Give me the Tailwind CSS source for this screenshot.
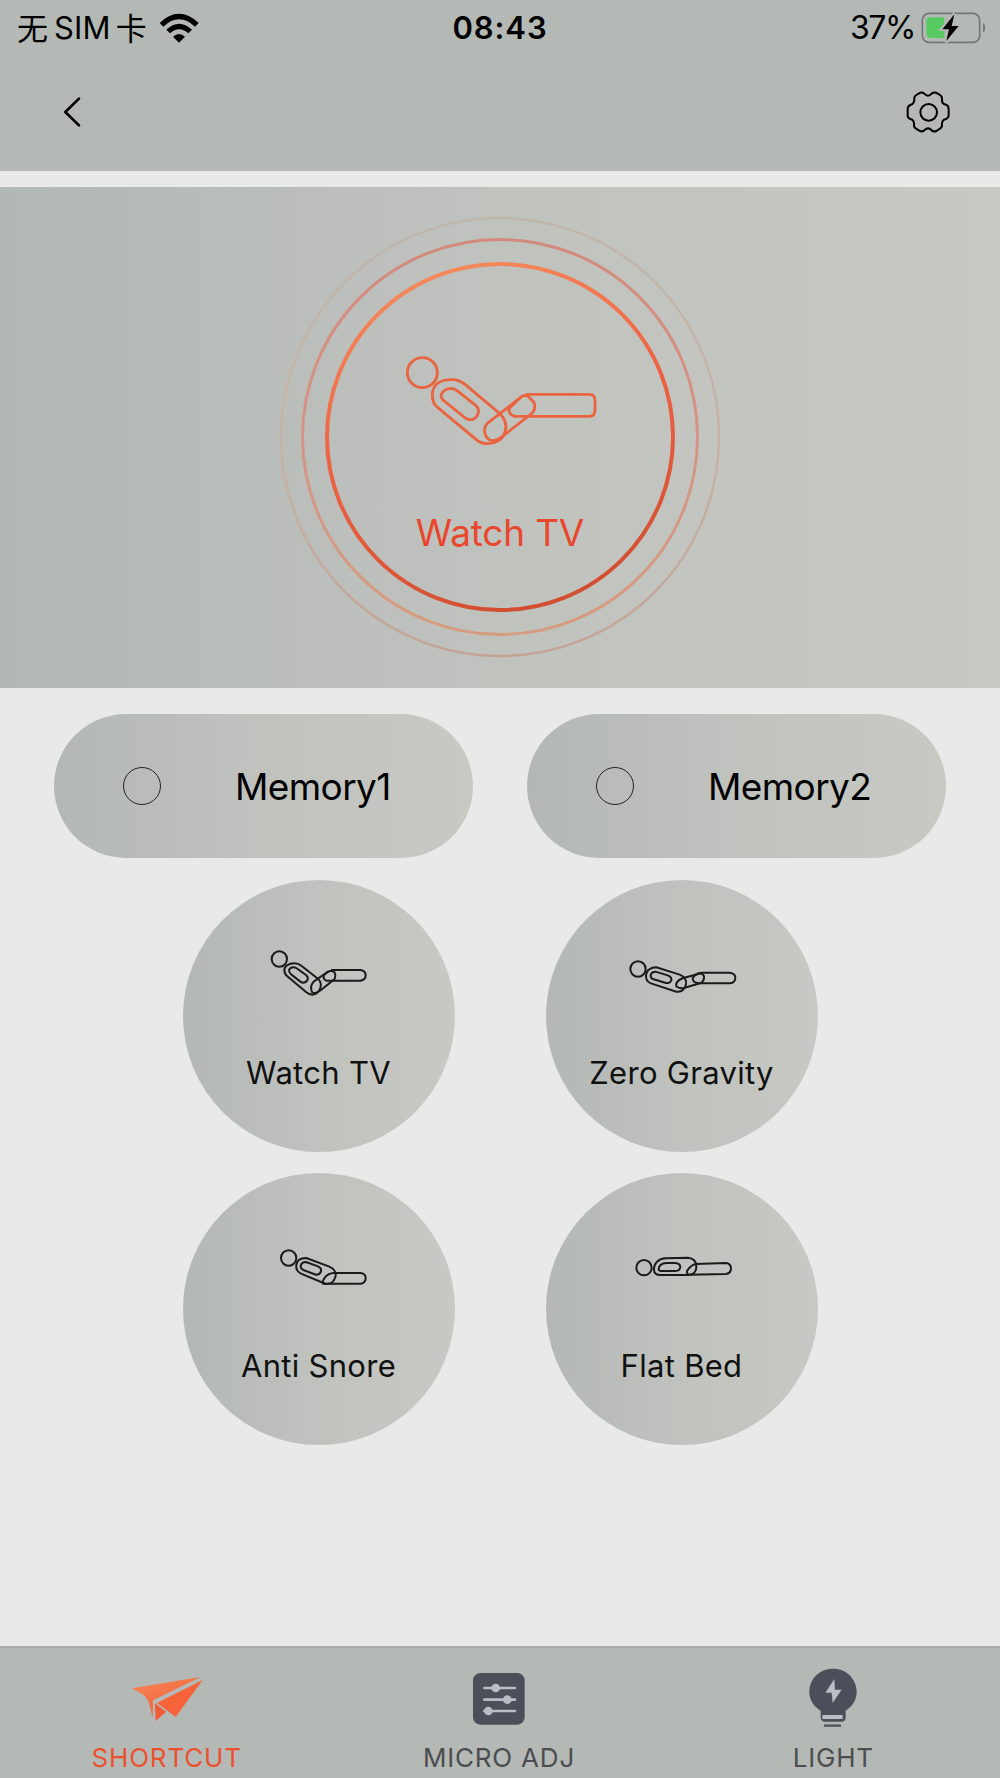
<!DOCTYPE html>
<html lang="en">

<head>
    <meta charset="UTF-8">
    <meta name="viewport" content="width=device-width, initial-scale=1.0">
    <title>Bed Remote</title>
    <script src="https://cdn.jsdelivr.net/npm/@tailwindcss/browser@4"></script>
</head>

<body class="bg-[#e9e9e9] h-[1778px] w-[1000px] flex flex-col overflow-hidden text-black font-['Inter','Noto_Sans_CJK_SC',sans-serif]">
    <header class="h-[171px] bg-[#b4b9b5] shrink-0">
        <!-- status bar -->
        <div class="h-[54px] grid grid-cols-3 items-center text-[31px] leading-[54px]">
            <div class="flex items-center pl-[17px] pt-px">
                <span class="text-[31px] leading-[50px] -mt-[3px] font-['Noto_Sans_CJK_SC',sans-serif] font-normal">无</span>
                <span class="ml-[6px] tracking-[0.2px]">SIM</span>
                <span class="ml-[5px] text-[31px] leading-[50px] -mt-[3px] font-['Noto_Sans_CJK_SC',sans-serif] font-normal">卡</span>
                <svg class="ml-[12px] w-[40px] h-[30px]" viewBox="478 36 120 90">
                    <path d="M480 66Q538 11 597 66L586 77Q538 33 491 77Z" />
                    <path d="M500 86Q538 50 577 86L566 97Q538 72 511 97Z" />
                    <path d="M520 107Q538 91 556 107L538 125Z" />
                </svg>
            </div>
            <div class="pt-px text-center font-semibold tracking-[0.9px]">08:43</div>
            <div class="flex items-center justify-end pr-[14px]">
                <span class="pt-px text-[32px] tracking-[-1.4px]">37%</span>
                <svg class="ml-[6px] w-[65px] h-[34px]" viewBox="1262 28 195 102">
                    <rect x="1266" y="35" width="172" height="87" rx="20" fill="none" stroke="#747875" stroke-width="5" />
                    <path d="M1448 64Q1455 68 1455 78Q1455 88 1448 92Z" fill="#747875" />
                    <path d="M1290 47H1332V109H1290Q1278 109 1278 97V59Q1278 47 1290 47Z" fill="#57cb62" />
                    <path d="M1362 36L1324 83H1345L1337 122L1376 73H1354Z" stroke="#b4b9b5" stroke-width="10" />
                    <path d="M1362 38L1326 83H1346L1338 118L1375 73H1354Z" />
                </svg>
            </div>
        </div>
        <div class="flex items-center justify-between pl-[63px] pr-[48px] h-[116px]">
            <svg class="w-[20px] h-[32px]" viewBox="188 288 60 96" fill="none" stroke="currentColor" stroke-width="8" stroke-linecap="round" stroke-linejoin="round">
                <path d="M236 296L195 336L236 376" />
            </svg>
            <svg class="w-[48px] h-[48px]" viewBox="1212 264 144 144" fill="none" stroke="currentColor" stroke-width="6" stroke-linejoin="round">
                <path d="M1257 280Q1266 275 1273 281Q1284 293 1295 281Q1303 275 1312 280L1320 285Q1327 289 1326 298Q1325 312 1338 314Q1346 317 1346 328V346Q1346 354 1338 357Q1325 360 1326 374Q1327 382 1320 386L1309 393Q1300 397 1294 390Q1284 380 1274 390Q1267 397 1258 392L1248 386Q1241 382 1242 374Q1243 360 1231 357Q1223 355 1223 346V327Q1223 318 1231 315Q1244 311 1243 297Q1242 289 1249 285Z" />
                <circle cx="1286" cy="337" r="25" />
            </svg>
        </div>
    </header>

    <!-- current position -->
    <section class="relative mt-[16px] h-[501px] shrink-0 bg-linear-to-r from-[#b2b8b5] via-[#c0c2be] to-[#c8c9c4] flex flex-col items-center text-[#e8472c]">
        <svg class="absolute left-[270px] top-[20px] w-[460px] h-[460px]" viewBox="0 0 460 460" fill="none">
            <defs>
                <linearGradient id="ringInner" x1="0.3" y1="0" x2="0.6" y2="1">
                    <stop offset="0" stop-color="#f58a5c" />
                    <stop offset="0.45" stop-color="#ee6243" />
                    <stop offset="1" stop-color="#d24e30" />
                </linearGradient>
                <linearGradient id="ringMiddle" x1="0" y1="0" x2="0" y2="1">
                    <stop offset="0" stop-color="#d3897d" />
                    <stop offset="0.5" stop-color="#d59484" />
                    <stop offset="1" stop-color="#d69c7f" />
                </linearGradient>
                <linearGradient id="ringOuter" x1="0" y1="0" x2="0" y2="1">
                    <stop offset="0" stop-color="#bfb6ac" />
                    <stop offset="0.5" stop-color="#c6b3a5" />
                    <stop offset="1" stop-color="#c3a396" />
                </linearGradient>
            </defs>
            <circle cx="230" cy="230" r="219" stroke="url(#ringOuter)" stroke-width="2.500" />
            <circle cx="230" cy="230" r="197.500" stroke="url(#ringMiddle)" stroke-width="3" />
            <circle cx="230" cy="230" r="173" stroke="url(#ringInner)" stroke-width="4" />
        </svg>
        <svg class="mt-[163px] w-[200px] h-[100px]" viewBox="30 30 600 300" fill="none" stroke="#ea6440" stroke-width="8.500">
            <circle cx="97" cy="98" r="45" />
            <path d="M127 165C127 132 152 119 185 119C204 119 215 125 226 134L325 217C345 234 351 256 345 276C338 300 315 311 293 311C280 311 268 307 258 298L140 200C129 190 127 178 127 165Z" />
            <path d="M154 163Q162 146 183 145C192 145 198 149 204 154L257 196C265 204 268 212 264 221C260 232 252 240 240 239C232 238 226 235 222 231L165 185C156 178 151 172 154 163Z" />
            <path d="M291 251L392 172Q404 162 416 170L431 186Q440 204 426 220L335 291Q316 306 300 300C283 292 278 264 291 251Z" />
            <path d="M408 163H598Q615 164 615 181V211Q615 229 598 229H374C358 224 351 211 363 200L390 174" />
        </svg>
        <div class="mt-[59px] text-[37px] leading-[48px] tracking-[-0.2px]">Watch TV</div>
    </section>

    <main class="flex-1 flex flex-col items-center">
        <div class="mt-[26px] flex gap-[54px]">
            <div class="w-[419px] h-[144px] rounded-full bg-linear-to-r from-[#b3b8b6] via-[#c0c2be] to-[#c9c9c4] flex items-center pl-[69px]">
                <span class="w-[38px] h-[38px] rounded-full border border-[#222]"></span>
                <span class="ml-[74px] pt-px text-[37px] leading-[48px] tracking-[-0.6px]">Memory1</span>
            </div>
            <div class="w-[419px] h-[144px] rounded-full bg-linear-to-r from-[#b3b8b6] via-[#c0c2be] to-[#c9c9c4] flex items-center pl-[69px]">
                <span class="w-[38px] h-[38px] rounded-full border border-[#222]"></span>
                <span class="ml-[74px] pt-px text-[37px] leading-[48px] tracking-[-0.6px]">Memory2</span>
            </div>
        </div>

        <div class="mt-[22px] grid grid-cols-2 gap-x-[91px] gap-y-[21px] text-[31px] leading-[40px] tracking-[0.3px] text-[#111]">
            <div class="w-[272px] h-[272px] rounded-full bg-linear-to-r from-[#b3b8b6] via-[#c0c2be] to-[#c8c9c4] flex flex-col items-center">
                <svg class="mt-[60px] w-[140px] h-[60px]" viewBox="236 210 420 180" fill="none" stroke="#1a1a1a" stroke-width="6">
                    <circle cx="327" cy="267" r="23" />
                    <path d="M342 300C342 287 356 280 372 280C381 280 387 282 393 287L440 324C450 332 454 343 450 354C445 367 437 374 426 374C419 374 413 371 408 367L350 318C344 313 342 307 342 300Z" />
                    <path d="M356 300Q361 291 371 292Q377 293 382 297L407 315Q414 321 412 328Q408 338 398 338Q393 337 389 334L362 313Q355 307 356 300Z" />
                    <path d="M430 335L471 306Q482 300 492 306Q498 316 492 328L449 362Q436 372 426 368Q417 350 430 335Z" />
                    <path d="M482 300H570Q586 302 586 316Q586 330 570 332H468Q456 326 461 315L474 305" />
                </svg>
                <div class="mt-[53px]">Watch TV</div>
            </div>
            <div class="w-[272px] h-[272px] rounded-full bg-linear-to-r from-[#b3b8b6] via-[#c0c2be] to-[#c8c9c4] flex flex-col items-center">
                <svg class="mt-[60px] w-[140px] h-[60px]" viewBox="245 210 420 180" fill="none" stroke="#1a1a1a" stroke-width="6">
                    <circle cx="323" cy="297" r="23" />
                    <path d="M347 316C347 301 361 292 378 292L448 314C462 319 470 332 467 343C463 358 453 367 438 365L362 340C351 336 346 328 347 316Z" />
                    <path d="M361 316Q363 305 376 305L412 316Q425 321 423 331Q418 341 407 339L370 328Q360 324 361 316Z" />
                    <path d="M459 324L501 313Q514 306 521 318Q522 334 511 339L461 354Q444 356 438 349Q434 333 459 324Z" />
                    <path d="M514 308H598Q615 310 615 323Q615 338 598 340H505Q486 337 487 325Q494 309 514 308Z" />
                </svg>
                <div class="mt-[53px]">Zero Gravity</div>
            </div>
            <div class="w-[272px] h-[272px] rounded-full bg-linear-to-r from-[#b3b8b6] via-[#c0c2be] to-[#c8c9c4] flex flex-col items-center">
                <svg class="mt-[61px] w-[140px] h-[60px]" viewBox="236 220 420 180" fill="none" stroke="#1a1a1a" stroke-width="6">
                    <circle cx="355" cy="292" r="23" />
                    <path d="M378 314C379 299 391 292 408 292L477 318C491 324 499 336 495 349C491 363 480 372 465 369L392 339C381 333 376 326 378 314Z" />
                    <path d="M391 315Q394 304 407 304L443 317Q454 322 452 332Q448 343 437 342L399 328Q390 323 391 315Z" />
                    <path d="M490 337H571Q586 339 586 352Q586 367 571 369H458Q454 364 464 350Q474 338 490 337Z" />
                </svg>
                <div class="mt-[52px]">Anti Snore</div>
            </div>
            <div class="w-[272px] h-[272px] rounded-full bg-linear-to-r from-[#b3b8b6] via-[#c0c2be] to-[#c8c9c4] flex flex-col items-center">
                <svg class="mt-[61px] w-[140px] h-[60px]" viewBox="245 220 420 180" fill="none" stroke="#1a1a1a" stroke-width="6">
                    <circle cx="341" cy="321" r="23" />
                    <path d="M371 326C371 306 386 294 406 293L473 291C489 292 499 304 498 318C498 333 488 343 472 343H390C379 343 371 337 371 326Z" />
                    <path d="M385 325Q387 308 408 307H434Q450 308 450 319Q449 331 434 331H391Q385 330 385 325Z" />
                    <path d="M497 310L588 307Q602 310 602 323Q602 338 587 340L476 342Q466 337 472 328Q482 313 497 310Z" />
                </svg>
                <div class="mt-[52px]">Flat Bed</div>
            </div>
        </div>
    </main>

    <nav class="h-[132px] shrink-0 border-t-2 border-[#a9adaa] bg-[#b4b9b5] grid grid-cols-3 text-[26px] leading-[34px] tracking-[0.8px] text-[#4b4d50]">
        <div class="flex flex-col items-center text-[#ea512f]">
            <svg class="mt-[20px] w-[76px] h-[64px]" viewBox="385 114 228 192">
                <defs>
                    <linearGradient id="plane" x1="0" y1="0" x2="0.6" y2="1">
                        <stop offset="0" stop-color="#f58b5b" />
                        <stop offset="1" stop-color="#f55a32" />
                    </linearGradient>
                </defs>
                <path d="M394 175L600 141L457 211L456 262L443 212L430 196Z" fill="url(#plane)" />
                <path d="M606 150L525 261L469 219Z" fill="#f6623a" />
                <path d="M463 220L496 246L465 273Z" fill="#f25a38" />
            </svg>
            <div class="mt-[9px]">SHORTCUT</div>
        </div>
        <div class="flex flex-col items-center pr-[2px]">
            <svg class="mt-[20px] w-[60px] h-[64px]" viewBox="0 0 180 192">
                <rect x="12" y="15" width="155" height="155" rx="22" fill="#4c4f59" />
                <g stroke="#b9bdc4" stroke-width="8" stroke-linecap="round">
                    <path d="M46 60H138M46 95H138M46 129H138" />
                </g>
                <g fill="#b9bdc4">
                    <circle cx="80" cy="60" r="13" />
                    <circle cx="115" cy="95" r="13" />
                    <circle cx="58" cy="129" r="13" />
                </g>
            </svg>
            <div class="mt-[9px]">MICRO ADJ</div>
        </div>
        <div class="flex flex-col items-center">
            <svg class="mt-[20px] w-[60px] h-[64px]" viewBox="910 114 180 192">
                <path d="M1000 116C1041 116 1071 147 1071 186C1071 211 1057 230 1038 242V263Q1037 275 1025 275H974Q963 274 963 262V242C942 230 929 210 929 186C929 147 959 116 1000 116Z" fill="#4c4f59" />
                <path d="M1004 147L977 188H996L999 219L1026 179H1006Z" fill="#b9bdc4" />
                <path d="M968 255H1029V267H968Z" fill="#b9bdc4" />
                <path d="M976 287H1021" stroke="#4c4f59" stroke-width="7" stroke-linecap="round" />
            </svg>
            <div class="mt-[9px]">LIGHT</div>
        </div>
    </nav>
</body>

</html>
